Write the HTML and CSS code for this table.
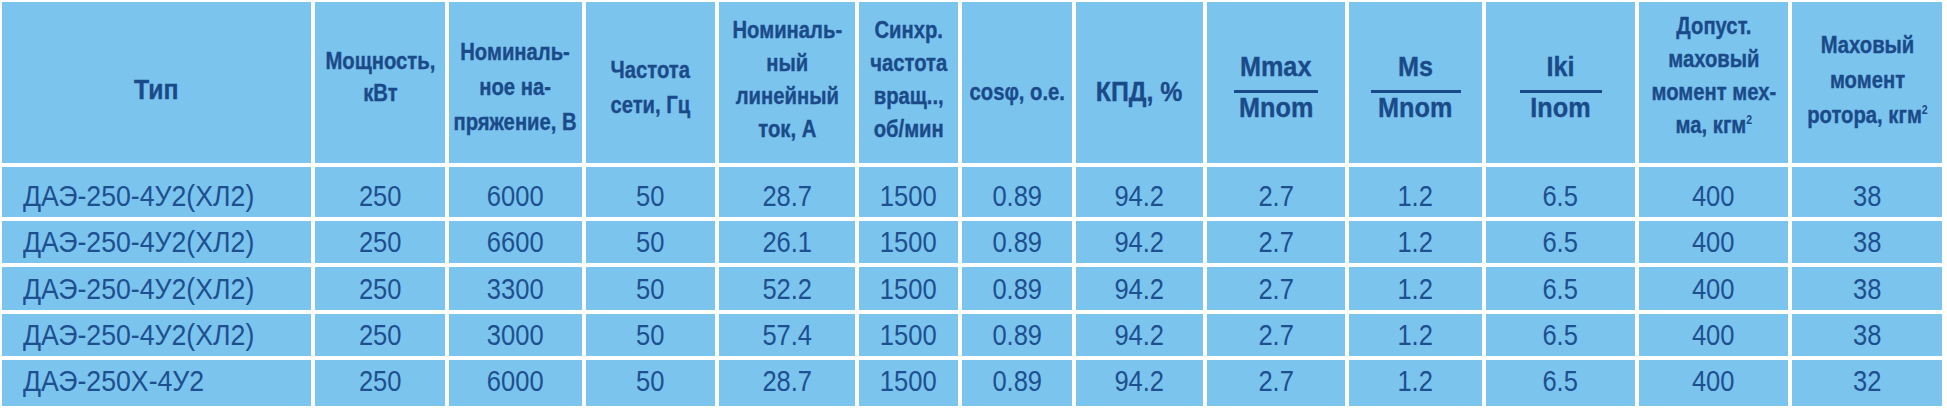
FILE: index.html
```html
<!DOCTYPE html>
<html lang="ru">
<head>
<meta charset="utf-8">
<title>ДАЭ-250</title>
<link rel="stylesheet" href="styles.css">
</head>
<body>
<div class="table">
  <div class="cell head big p-tip"><span class="t">Тип</span></div>
  <div class="cell head p-pow"><span class="t">Мощность,<br>кВт</span></div>
  <div class="cell head p-volt"><span class="t">Номиналь-<br>ное на-<br>пряжение, В</span></div>
  <div class="cell head p-freq"><span class="t">Частота<br>сети, Гц</span></div>
  <div class="cell head four p-cur"><span class="t">Номиналь-<br>ный<br>линейный<br>ток, А</span></div>
  <div class="cell head four p-rpm"><span class="t">Синхр.<br>частота<br>вращ..,<br>об/мин</span></div>
  <div class="cell head p-cos"><span class="t">cosφ, o.e.</span></div>
  <div class="cell head big p-eff"><span class="t">КПД, %</span></div>
  <div class="cell head p-frac">
    <div class="frac"><span class="t num">Mmax</span><span class="bar bar-mmax"></span><span class="t den">Mnom</span></div>
  </div>
  <div class="cell head p-frac">
    <div class="frac"><span class="t num">Ms</span><span class="bar bar-ms"></span><span class="t den">Mnom</span></div>
  </div>
  <div class="cell head p-frac">
    <div class="frac"><span class="t num">Iki</span><span class="bar bar-iki"></span><span class="t den">Inom</span></div>
  </div>
  <div class="cell head four p-mech"><span class="t">Допуст.<br>маховый<br>момент мех-<br>ма, кгм<sup>2</sup></span></div>
  <div class="cell head p-rot"><span class="t">Маховый<br>момент<br>ротора, кгм<sup>2</sup></span></div>

  <div class="cell name r1"><span class="t">ДАЭ-250-4У2(ХЛ2)</span></div><div class="cell r1"><span class="t">250</span></div><div class="cell r1"><span class="t">6000</span></div><div class="cell r1"><span class="t">50</span></div><div class="cell r1"><span class="t">28.7</span></div><div class="cell r1"><span class="t">1500</span></div><div class="cell r1"><span class="t">0.89</span></div><div class="cell r1"><span class="t">94.2</span></div><div class="cell r1"><span class="t">2.7</span></div><div class="cell r1"><span class="t">1.2</span></div><div class="cell r1"><span class="t">6.5</span></div><div class="cell r1"><span class="t">400</span></div><div class="cell r1"><span class="t">38</span></div>

  <div class="cell name"><span class="t">ДАЭ-250-4У2(ХЛ2)</span></div><div class="cell"><span class="t">250</span></div><div class="cell"><span class="t">6600</span></div><div class="cell"><span class="t">50</span></div><div class="cell"><span class="t">26.1</span></div><div class="cell"><span class="t">1500</span></div><div class="cell"><span class="t">0.89</span></div><div class="cell"><span class="t">94.2</span></div><div class="cell"><span class="t">2.7</span></div><div class="cell"><span class="t">1.2</span></div><div class="cell"><span class="t">6.5</span></div><div class="cell"><span class="t">400</span></div><div class="cell"><span class="t">38</span></div>

  <div class="cell name"><span class="t">ДАЭ-250-4У2(ХЛ2)</span></div><div class="cell"><span class="t">250</span></div><div class="cell"><span class="t">3300</span></div><div class="cell"><span class="t">50</span></div><div class="cell"><span class="t">52.2</span></div><div class="cell"><span class="t">1500</span></div><div class="cell"><span class="t">0.89</span></div><div class="cell"><span class="t">94.2</span></div><div class="cell"><span class="t">2.7</span></div><div class="cell"><span class="t">1.2</span></div><div class="cell"><span class="t">6.5</span></div><div class="cell"><span class="t">400</span></div><div class="cell"><span class="t">38</span></div>

  <div class="cell name"><span class="t">ДАЭ-250-4У2(ХЛ2)</span></div><div class="cell"><span class="t">250</span></div><div class="cell"><span class="t">3000</span></div><div class="cell"><span class="t">50</span></div><div class="cell"><span class="t">57.4</span></div><div class="cell"><span class="t">1500</span></div><div class="cell"><span class="t">0.89</span></div><div class="cell"><span class="t">94.2</span></div><div class="cell"><span class="t">2.7</span></div><div class="cell"><span class="t">1.2</span></div><div class="cell"><span class="t">6.5</span></div><div class="cell"><span class="t">400</span></div><div class="cell"><span class="t">38</span></div>

  <div class="cell name r5"><span class="t">ДАЭ-250Х-4У2</span></div><div class="cell r5"><span class="t">250</span></div><div class="cell r5"><span class="t">6000</span></div><div class="cell r5"><span class="t">50</span></div><div class="cell r5"><span class="t">28.7</span></div><div class="cell r5"><span class="t">1500</span></div><div class="cell r5"><span class="t">0.89</span></div><div class="cell r5"><span class="t">94.2</span></div><div class="cell r5"><span class="t">2.7</span></div><div class="cell r5"><span class="t">1.2</span></div><div class="cell r5"><span class="t">6.5</span></div><div class="cell r5"><span class="t">400</span></div><div class="cell r5"><span class="t">32</span></div>
</div>
</body>
</html>
```

FILE: styles.css
```css
html, body {
  margin: 0;
  padding: 0;
  background: #ffffff;
}

.table {
  display: grid;
  grid-template-columns: 309px 130px 133px 129px 136px 99px 110px 127px 138px 133px 149px 149px 150px;
  grid-template-rows: 161px 50px 42px 43px 42px 46px;
  gap: 4px;
  padding: 2px;
  width: max-content;
  background: #ffffff;
  font-family: "Liberation Sans", Arial, sans-serif;
}

.cell {
  box-sizing: border-box;
  background: #7ac4ee;
  color: #1e4f8e;
  display: flex;
  align-items: center;
  justify-content: center;
  text-align: center;
  font-size: 29px;
  line-height: 32px;
}

.t {
  display: inline-block;
  white-space: nowrap;
  transform: scaleX(0.88);
}

.name {
  justify-content: flex-start;
  padding-left: 21px;
}

.name .t {
  transform-origin: left center;
  transform: scaleX(0.92);
}

.r1 { padding-top: 7px; }
.r5 { padding-bottom: 5px; }

/* header */
.head {
  font-weight: bold;
  font-size: 23px;
  line-height: 35px;
  color: #1b4a89;
  -webkit-text-stroke: 0.35px #1b4a89;
}

.head.four {
  line-height: 33px;
}

.head.big {
  font-size: 27px;
}

.head.big .t {
  transform: scaleX(0.92);
}

.head sup {
  font-size: 12px;
  line-height: 0;
  vertical-align: 9px;
  -webkit-text-stroke: 0;
}

.p-tip  { padding-top: 15px; }
.p-pow  { padding-bottom: 11px; line-height: 32px; }
.p-volt { padding-top: 10px; }
.p-freq { padding-top: 10px; }
.p-cur  { padding-bottom: 5px; }
.p-rpm  { padding-bottom: 5px; }
.p-cos  { padding-top: 19px; }
.p-eff  { padding-top: 20px; }
.p-frac { padding-top: 9px; }
.p-mech { padding-bottom: 13px; }
.p-rot  { padding-bottom: 5px; }

/* fractions */
.frac {
  display: flex;
  flex-direction: column;
  align-items: center;
  font-size: 28px;
  line-height: 28px;
}

.frac .t {
  transform: scaleX(0.9);
}

.frac .num {
  margin-bottom: 9px;
}

.bar {
  display: block;
  height: 3px;
  background: #1b4a89;
  margin-bottom: 1px;
}

.bar-mmax { width: 84px; }
.bar-ms   { width: 90px; }
.bar-iki  { width: 82px; }
```
